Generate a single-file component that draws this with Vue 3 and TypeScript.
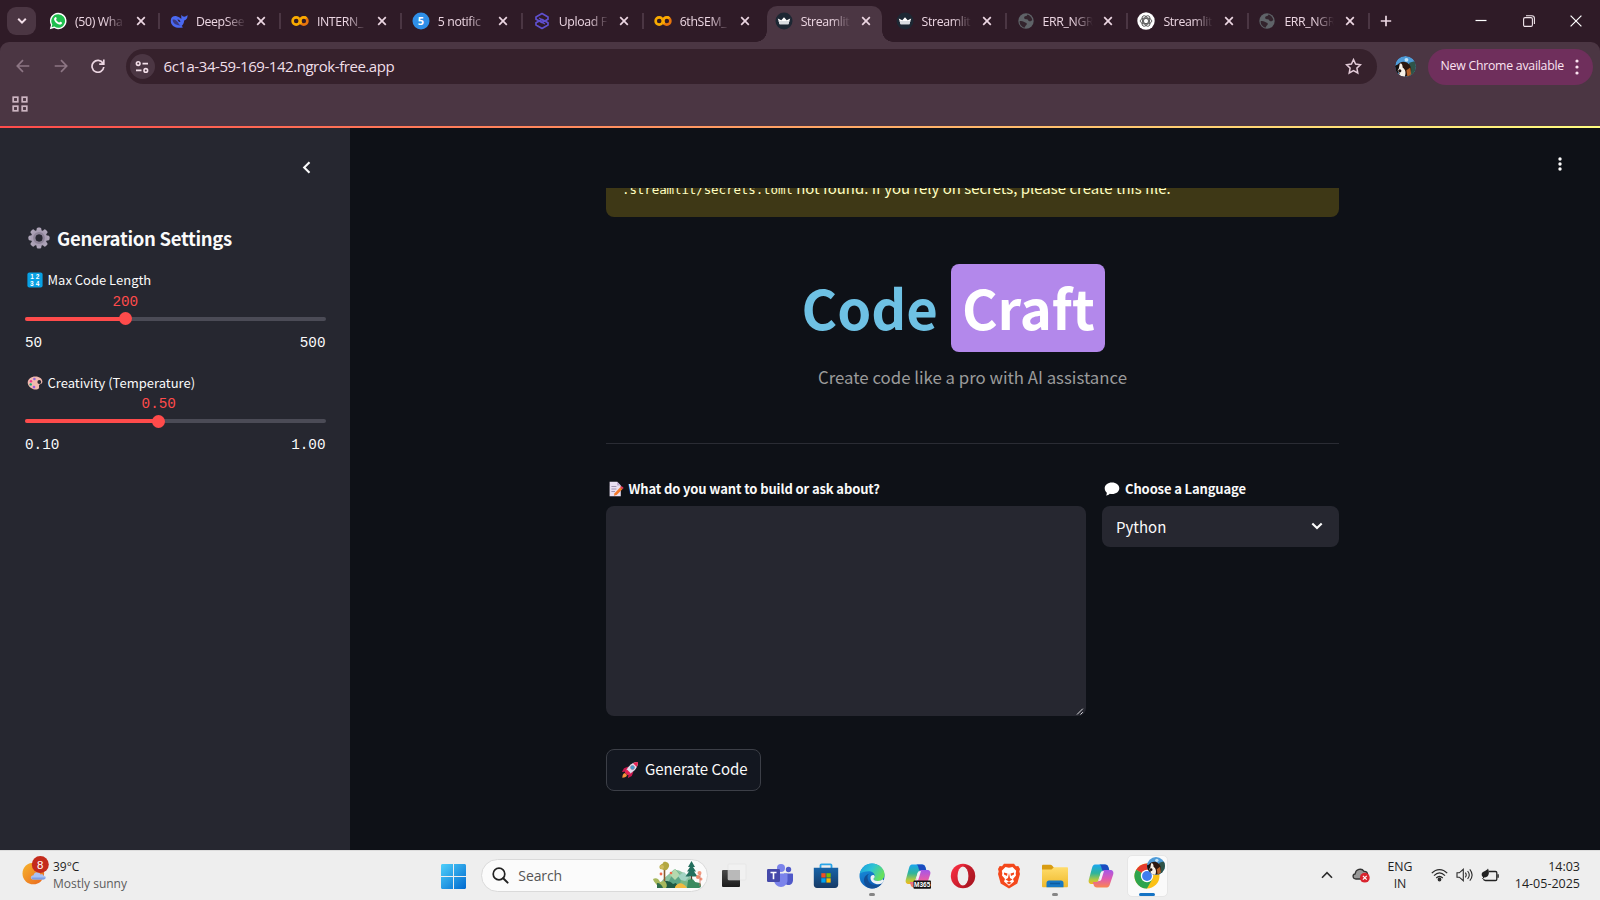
<script setup lang="ts">
interface Tab {
  title: string
  icon: 'whatsapp' | 'deepseek' | 'colab' | 'five' | 'upload' | 'crown' | 'globe' | 'gpt'
  active?: boolean
  sep: boolean
}

interface Slider {
  kind: 'numbers' | 'palette'
  label: string
  value: string
  min: string
  max: string
  pct: number
}

const tabs: Tab[] = [
  { title: '(50) Wha', icon: 'whatsapp', sep: true },
  { title: 'DeepSee', icon: 'deepseek', sep: true },
  { title: 'INTERN_', icon: 'colab', sep: true },
  { title: '5 notific', icon: 'five', sep: true },
  { title: 'Upload F', icon: 'upload', sep: true },
  { title: '6thSEM_', icon: 'colab', sep: false },
  { title: 'Streamlit', icon: 'crown', active: true, sep: false },
  { title: 'Streamlit', icon: 'crown', sep: true },
  { title: 'ERR_NGR', icon: 'globe', sep: true },
  { title: 'Streamlit', icon: 'gpt', sep: true },
  { title: 'ERR_NGR', icon: 'globe', sep: true },
]

const sliders: Slider[] = [
  { kind: 'numbers', label: 'Max Code Length', value: '200', min: '50', max: '500', pct: 33.33 },
  { kind: 'palette', label: 'Creativity (Temperature)', value: '0.50', min: '0.10', max: '1.00', pct: 44.44 },
]
</script>

<template>
  <div class="screen">
    <svg class="defs" width="0" height="0" aria-hidden="true">
      <defs>
        <linearGradient id="gWin" x1="0" y1="0" x2="1" y2="1"><stop offset="0" stop-color="#4fd0fb" /><stop offset="1" stop-color="#0069cf" /></linearGradient>
        <linearGradient id="gEdgeA" x1="0" y1="0" x2="1" y2="0.5"><stop offset="0" stop-color="#1a9be0" /><stop offset="0.5" stop-color="#2cc3d5" /><stop offset="1" stop-color="#66e05a" /></linearGradient>
        <linearGradient id="gEdgeB" x1="0" y1="0" x2="0.4" y2="1"><stop offset="0" stop-color="#1c9ce4" /><stop offset="1" stop-color="#0c59b5" /></linearGradient>
        <linearGradient id="gCopA" x1="0" y1="0" x2="0" y2="1"><stop offset="0" stop-color="#1aa6f0" /><stop offset="0.45" stop-color="#2fb49b" /><stop offset="0.8" stop-color="#b8c93c" /><stop offset="1" stop-color="#f3b41b" /></linearGradient>
        <linearGradient id="gCopB" x1="0" y1="0" x2="0" y2="1"><stop offset="0" stop-color="#a457e8" /><stop offset="0.5" stop-color="#e05ab0" /><stop offset="1" stop-color="#fa8650" /></linearGradient>
        <linearGradient id="gOpera" x1="0" y1="0" x2="1" y2="1"><stop offset="0" stop-color="#ff3044" /><stop offset="1" stop-color="#a9121e" /></linearGradient>
        <linearGradient id="gSun" x1="0" y1="0" x2="1" y2="1"><stop offset="0" stop-color="#f7b52c" /><stop offset="1" stop-color="#e9661f" /></linearGradient>
        <linearGradient id="gStore" x1="0" y1="0" x2="0" y2="1"><stop offset="0" stop-color="#1763a8" /><stop offset="1" stop-color="#163a66" /></linearGradient>
        <linearGradient id="gFolder" x1="0" y1="0" x2="0" y2="1"><stop offset="0" stop-color="#ffdc6b" /><stop offset="1" stop-color="#efb92c" /></linearGradient>
        <linearGradient id="gDark" x1="0" y1="0" x2="0" y2="1"><stop offset="0" stop-color="#4a4a4a" /><stop offset="1" stop-color="#1c1c1c" /></linearGradient>
        <clipPath id="dogClip"><circle cx="11" cy="11" r="11" /></clipPath>
        <symbol id="dog" viewBox="0 0 22 22">
          <g clip-path="url(#dogClip)">
            <rect width="22" height="22" fill="#4e9bd8" />
            <circle cx="12" cy="4" r="2" fill="#bfe2f7" />
            <path d="M15 7 22 5v17h-9z" fill="#2f5449" />
            <path d="M2 10c3-5 9-5 12-2 3 2 4 7 2 11-2 3-8 3-11 3z" fill="#2b1710" />
            <path d="M0 10l4-1 1 4-2 6-3-2z" fill="#14100f" />
            <path d="M5 8c2-1 3 1 3 4 3 2 4 6 2 10H3l2-4c-2-2-3-3-1-5z" fill="#f6efe6" />
            <path d="M12 15l4-3 1 7-4 3z" fill="#b5612a" />
            <circle cx="5" cy="15.500" r="1.700" fill="#201412" />
          </g>
        </symbol>
        <symbol id="copilot" viewBox="0 0 26 26">
          <path d="M7 1.500h10c2 0 3 1 3.500 3L21.500 8H15l-2 1-3 9c-.6 2-1.500 3-3.500 3H4c-3 0-4-2-3-5L4 5c.6-2 1.500-3.500 3-3.500z" fill="url(#gCopA)" />
          <path d="M11 1.500h6c2 0 3 1 3.500 3L21.500 8h-5c-2 0-2.500-1-3-3-.4-2-1-3.500-2.500-3.500z" fill="#1c4bc0" />
          <path d="M19 24.500H9c-2 0-3-1-3.500-3l-.7-2.500H8c2 0 3-1 3.500-3l2.500-7c.6-1.500 1.500-2 3-2h5c3 0 4 2 3 5l-3 9c-.6 2-1.500 3.500-3 3.500z" fill="url(#gCopB)" />
          <path d="M12.500 10.500c.6-1.700 1.500-2.500 3-2.500H16l-2.500 8c-.4 1.400-1.200 2-2.500 2z" fill="#f4eef6" />
        </symbol>
      </defs>
    </svg>

    <header class="tabstrip">
      <div class="tab-search">
        <svg width="12" height="8" viewBox="0 0 12 8"><path d="M2.200 1.800 6 5.600l3.800-3.800" fill="none" stroke="#f3dfe9" stroke-width="2" /></svg>
      </div>
      <div class="tabs">
        <div v-for="(tab, i) in tabs" :key="i" class="tab" :class="{ active: tab.active }">
          <svg class="favicon" width="18" height="18" viewBox="0 0 18 18">
            <template v-if="tab.icon === 'whatsapp'">
              <path d="M9 .8a8.100 8.100 0 0 0-7 12.100L.8 17.200l4.400-1.100A8.200 8.200 0 1 0 9 .8z" fill="#fff" />
              <path d="M9.100 2.200a6.800 6.800 0 0 0-5.800 10.300l-.7 2.800 2.800-.7a6.800 6.800 0 1 0 3.700-12.400z" fill="#1fbf4e" />
              <path d="M6.300 5.200c.6-.3 1 0 1.300 1.100.2.700-.4 1-.5 1.500.6 1.300 1.500 2.100 2.900 2.700.6-.1.900-1 1.500-.8 1.600.6 1.800.9 1.500 1.600-.5 1.300-2 1.600-3.500 1C7.200 11.400 5.900 9.800 5.200 8c-.4-1.200.2-2.400 1.100-2.800z" fill="#fff" />
            </template>
            <template v-else-if="tab.icon === 'deepseek'">
              <path d="M.8 8.200C1 5 3.600 3.600 6.600 4.200c2 .4 3.200 1.400 4.700 2.900.2-1.600-.3-2.500.3-4.300.7 1.400 1.400 1.900 2.600 1.900 1.300 0 2-.5 3.300-1.700.3 2.800-.9 5-3.300 5.500-.2 2.600-1.100 4.200-2.600 5.400l1.500 1.300c-2.900.9-7.300.8-10-1.300C1.500 12.500.6 10.600.8 8.200z" fill="#4a68f0" />
              <path d="M2.600 7.600c2.800-.6 4.500 1.500 6.200 4.200.7 1.100 1.300 1.500 2 1.700-3.600.4-8.400-1.800-8.200-5.900z" fill="#3b3a80" />
              <path d="M7.400 7.600c1.600-.3 2.800.8 3 2.400l-1.500-.2z" fill="#2e1a28" />
            </template>
            <template v-else-if="tab.icon === 'colab'">
              <circle cx="5.200" cy="9" r="3.600" fill="none" stroke="#f9ab00" stroke-width="2.600" />
              <circle cx="12.800" cy="9" r="3.600" fill="none" stroke="#e8740c" stroke-width="2.600" />
              <path d="M10.300 11.600a3.600 3.600 0 1 1 5.100-5.200" fill="none" stroke="#f9ab00" stroke-width="2.600" />
            </template>
            <template v-else-if="tab.icon === 'five'">
              <circle cx="9" cy="9" r="8.500" fill="#2f8fe8" />
              <text x="9" y="12.900" text-anchor="middle" class="five">5</text>
            </template>
            <template v-else-if="tab.icon === 'upload'">
              <g fill="none" stroke="#5f50cf" stroke-width="1.700" stroke-linejoin="round">
                <path d="M9 1.500 15 4.900v2.300L9 10.600 3 7.200V4.900z" />
                <path d="M9 7.400l6 3.400v2.300l-6 3.400-6-3.400v-2.300z" />
                <path d="M6 6l6 3.400M6 8.600l6 3.400" stroke-width="1.400" />
              </g>
            </template>
            <template v-else-if="tab.icon === 'crown'">
              <circle cx="9" cy="9" r="8.500" fill="#1d2733" />
              <path d="M2.800 6.400 6.300 8.300 9 5.200l2.700 3.100 3.500-1.900-1.800 5.800H4.600z" fill="#fff" />
              <path d="M3.600 9h10.800l-1 3.200H4.600z" fill="#d9dde1" />
            </template>
            <template v-else-if="tab.icon === 'globe'">
              <circle cx="9" cy="9" r="7.700" fill="#5f6368" />
              <path d="M2.600 9.200c1-.4 3-.3 4.200.6 1.200 1 3 .7 3 2.100 0 1.300-1.700 1.200-1.900 3.700-3-.4-5.300-3-5.300-6.400zM8.200 4.300c1.400 0 1.900-.7 2.200-1.700 2.500.6 4.400 2.800 4.900 5.300-1 .6-1.600 1.700-3 1.300-1.300-.4-1-1.800-2.500-2-1.500-.2-2.200.1-2.600-1-.2-1 .3-1.800 1-1.900z" fill="#33242d" />
            </template>
            <template v-else>
              <circle cx="9" cy="9" r="8.700" fill="#fff" />
              <g fill="none" stroke="#444" stroke-width="0.800">
                <ellipse v-for="a in [0, 60, 120]" :key="a" cx="9" cy="9" rx="5.800" ry="3.100" :transform="`rotate(${a} 9 9)`" />
                <path d="M9 6.300l2.400 1.400v2.700L9 11.800l-2.400-1.400V7.700z" />
              </g>
            </template>
          </svg>
          <span class="title">{{ tab.title }}</span>
          <svg class="close" width="10" height="10" viewBox="0 0 10 10"><path d="M1.200 1.200l7.600 7.600M8.800 1.200 1.200 8.800" stroke="#ecd6e2" stroke-width="1.700" /></svg>
          <i v-if="tab.sep" class="sep"></i>
        </div>
      </div>
      <svg class="plus" width="12" height="12" viewBox="0 0 12 12"><path d="M6 .8v10.400M.8 6h10.400" stroke="#ecd6e2" stroke-width="1.700" /></svg>
      <div class="winctl">
        <svg width="12" height="12" viewBox="0 0 12 12"><path d="M.5 5.500h11" stroke="#fff" stroke-width="1.200" /></svg>
        <svg width="12" height="12" viewBox="0 0 12 12"><g fill="none" stroke="#f1e6ec" stroke-width="1.100"><rect x=".6" y="2.600" width="8.800" height="8.800" rx="1.400" /><path d="M3 .7h5.800c1.500 0 2.600 1 2.600 2.500V9" /></g></svg>
        <svg width="12" height="12" viewBox="0 0 12 12"><path d="M.6.6l10.800 10.800M11.400.6.6 11.400" stroke="#fff" stroke-width="1.200" /></svg>
      </div>
    </header>

    <div class="toolbar">
      <div class="navrow">
        <svg class="nav dim" width="14" height="14" viewBox="0 0 14 14"><path d="M13.300 7H1.500M7 1.200 1.300 7 7 12.800" /></svg>
        <svg class="nav dim" width="14" height="14" viewBox="0 0 14 14"><path d="M.7 7h11.800M7 1.200 12.700 7 7 12.800" /></svg>
        <svg class="nav" width="14" height="14" viewBox="0 0 14 14"><path d="M12 4.300A5.900 5.900 0 1 0 12.800 8M12.800.5v4.700H8.200" /></svg>
        <div class="omnibox">
          <div class="tune">
            <svg width="14" height="14" viewBox="0 0 14 14" fill="none" stroke="#f3dfe9" stroke-width="1.600"><circle cx="3.200" cy="3.600" r="1.800" /><path d="M7.500 3.600H13M1 10.400h5.500" /><circle cx="10.800" cy="10.400" r="1.800" /></svg>
          </div>
          <span class="url">6c1a-34-59-169-142.ngrok-free.app</span>
          <svg class="star" width="17" height="17" viewBox="0 0 17 17"><path d="M8.500 1.600l2.100 4.500 4.900.6-3.600 3.400.9 4.900-4.300-2.400L4.200 15l.9-4.900L1.500 6.700l4.900-.6z" fill="none" stroke="#e3cbd8" stroke-width="1.500" /></svg>
        </div>
        <svg class="avatar" width="21" height="21"><use href="#dog" /></svg>
        <div class="update"><span>New Chrome available</span>
          <svg width="4" height="16" viewBox="0 0 4 16" fill="#fbe3f1"><circle cx="2" cy="2" r="1.600" /><circle cx="2" cy="8" r="1.600" /><circle cx="2" cy="14" r="1.600" /></svg>
        </div>
      </div>
      <div class="bookmarks">
        <svg width="16" height="16" viewBox="0 0 16 16" fill="none" stroke="#cdb5c2" stroke-width="1.700"><rect x="1.200" y="1.200" width="4.600" height="4.600" /><rect x="10.200" y="1.200" width="4.600" height="4.600" /><rect x="1.200" y="10.200" width="4.600" height="4.600" /><rect x="10.200" y="10.200" width="4.600" height="4.600" /></svg>
      </div>
    </div>

    <div class="page">
      <div class="rainbow"></div>
      <aside class="sidebar">
        <div class="collapse">
          <svg width="9" height="13" viewBox="0 0 9 13"><path d="M7.500 1.300 2.200 6.500l5.300 5.200" fill="none" stroke="#fafafa" stroke-width="2.100" /></svg>
        </div>
        <h2>
          <svg width="22" height="22" viewBox="0 0 22 22">
            <g fill="#aea4b8"><rect v-for="a in [0, 45, 90, 135]" :key="a" x="8.600" y="0.400" width="4.800" height="21.200" rx="1.600" :transform="`rotate(${a} 11 11)`" /></g>
            <circle cx="11" cy="11" r="6" fill="#292833" stroke="#a89db3" stroke-width="4.200" />
            <circle cx="11" cy="11" r="4.800" fill="none" stroke="#8d8398" stroke-width="2.200" />
          </svg>
          <span>Generation Settings</span>
        </h2>
        <section v-for="s in sliders" :key="s.label" class="slider">
          <div class="s-label">
            <svg v-if="s.kind === 'numbers'" width="16" height="16" viewBox="0 0 16 16">
              <rect x=".4" y=".4" width="15.200" height="15.200" rx="2" fill="#08a1e4" />
              <g class="nums"><text x="3.300" y="7">1</text><text x="8.700" y="7">2</text><text x="3" y="13.600">3</text><text x="8.700" y="13.600">4</text></g>
            </svg>
            <svg v-else width="16" height="16" viewBox="0 0 16 16">
              <path d="M8.500 1.400c4 0 6.900 2.300 6.900 5.200 0 2.500-2.200 2.300-3.200 3.400-.8.900.6 2.200-.5 3.500-.9 1.200-3.300 1.400-5.400.7C3 13.100.7 10.500.7 7.600c0-3.600 3.400-6.200 7.800-6.200z" fill="#f3b8ae" />
              <circle cx="12.300" cy="7" r="1.900" fill="#292833" /><circle cx="7.400" cy="4" r="1.300" fill="#9167d8" /><circle cx="4" cy="6.200" r="1.200" fill="#f0388a" /><circle cx="3.700" cy="9.400" r="1.200" fill="#15a878" /><circle cx="7" cy="12.100" r="1.300" fill="#9a5be0" />
            </svg>
            <span>{{ s.label }}</span>
          </div>
          <div class="s-value"><span :style="{ left: s.pct + '%' }">{{ s.value }}</span></div>
          <div class="track"><div class="fill" :style="{ width: s.pct + '%' }"><i class="thumb"></i></div></div>
          <div class="s-range"><span>{{ s.min }}</span><span>{{ s.max }}</span></div>
        </section>
      </aside>

      <main class="main">
        <div class="app-header">
          <svg width="4" height="14" viewBox="0 0 4 14" fill="#fafafa"><circle cx="2" cy="2" r="1.700" /><circle cx="2" cy="7" r="1.700" /><circle cx="2" cy="12" r="1.700" /></svg>
        </div>
        <div class="scroller">
          <div class="alert"><p><code>.streamlit/secrets.toml</code> not found. If you rely on secrets, please create this file.</p></div>
          <div class="hero"><span class="w-code">Code</span><span class="w-craft">Craft</span></div>
          <p class="tagline">Create code like a pro with AI assistance</p>
          <hr />
          <div class="form">
            <div class="col-a">
              <div class="f-label">
                <svg width="16" height="16" viewBox="0 0 16 16">
                  <path d="M1.600.8h7.600l3.600 3.600v10.800H1.600z" fill="#e9dff2" /><path d="M9.200.8v3.600h3.600z" fill="#b9a7c9" />
                  <path d="M3.400 5.500h5M3.400 8h5M3.400 10.500h3.600" stroke="#998ba9" stroke-width=".9" />
                  <path d="M12.300 6.200l2.300 1.900-6 6-2.700.7.700-2.600z" fill="#f5792a" /><path d="M12.300 6.200l1.200-1.100 2.200 1.900-1.100 1.100z" fill="#ee3d63" />
                </svg>
                <span>What do you want to build or ask about?</span>
              </div>
              <div class="textarea">
                <svg width="8" height="8" viewBox="0 0 8 8"><path d="M1 7.500 6.800 1.700M4.500 7.500l2.300-2.300" stroke="#d8d8dc" stroke-width="1" /></svg>
              </div>
            </div>
            <div class="col-b">
              <div class="f-label lang">
                <svg width="16" height="16" viewBox="0 0 16 16"><path d="M8 1.500c4.200 0 7.300 2.500 7.300 5.800s-3.100 5.800-7.300 5.800c-.8 0-1.600-.1-2.300-.3-.8 1-2.100 1.700-3.700 1.800.7-.9.900-1.900.8-2.900C1.500 10.600.7 9 .7 7.300.7 4 3.800 1.500 8 1.500z" fill="#fff" /></svg>
                <span>Choose a Language</span>
              </div>
              <div class="select"><span>Python</span>
                <svg width="12" height="8" viewBox="0 0 12 8"><path d="M1.300 1.400 6 6.100l4.700-4.700" fill="none" stroke="#fafafa" stroke-width="2.100" /></svg>
              </div>
            </div>
          </div>
          <div class="generate">
            <svg width="18" height="18" viewBox="0 0 18 18">
              <path d="M7.500 5.500 3 7.200.9 11l4.500-.6zM12.500 10.500 10.800 15 7 17l.6-4.500z" fill="#c9184e" />
              <path d="M17 1C12 1 7.800 4 4.500 10.500l3 3C14 10.200 17 6 17 1z" fill="#e3dcec" />
              <path d="M17 1c-1.800 0-3.500.4-5 1.200L15.800 6C16.600 4.500 17 2.800 17 1zM5.700 8.300l-1.900 3.200 2.700 2.700 3.200-1.900z" fill="#e62253" />
              <circle cx="11.500" cy="6.500" r="1.900" fill="#3ba0d6" stroke="#8a7d9b" stroke-width=".8" />
              <path d="M4 12c-1.800.4-2.600 2-2.700 4.700 2.700-.1 4.300-.9 4.700-2.700z" fill="#f7933a" />
            </svg>
            <span>Generate Code</span>
          </div>
        </div>
      </main>
    </div>

    <footer class="taskbar">
      <div class="weather">
        <svg width="28" height="30" viewBox="0 0 28 30">
          <circle cx="11.300" cy="18.500" r="10.800" fill="url(#gSun)" />
          <path d="M11.500 24.500c-3.500 0-3.500-4 0-4.300.5-3.700 6-3.900 7-.7 1.500-.8 3 0 3 1.300 3.300.2 3 3.700 0 3.700z" fill="#a9c1f5" /><path d="M9.500 22.500h13.800c0 1.300-.8 2-2 2H11.500c-1.200 0-2-.8-2-2z" fill="#7f9fe6" />
          <circle cx="18.300" cy="9.500" r="8.500" fill="#c42b1c" /><text x="18.300" y="13.500" class="badge" text-anchor="middle">8</text>
        </svg>
        <div class="w-text"><b>39°C</b><span>Mostly sunny</span></div>
      </div>

      <div class="dock">
        <div class="slot start"><svg width="25" height="25" viewBox="0 0 25 25" fill="url(#gWin)"><path d="M1.500 0H12v12H0V1.500C0 .6.600 0 1.500 0zM13 0h10.500c.9 0 1.500.6 1.500 1.500V12H13zM0 13h12v12H1.500c-.9 0-1.500-.6-1.500-1.500zM13 13h12v10.500c0 .9-.6 1.500-1.500 1.500H13z" /></svg></div>
        <div class="search">
          <svg width="17" height="17" viewBox="0 0 17 17"><circle cx="7" cy="7" r="5.800" fill="none" stroke="#222" stroke-width="1.700" /><path d="M11.200 11.200 15.600 15.600" stroke="#222" stroke-width="2" stroke-linecap="round" /></svg>
          <span>Search</span>
          <svg class="forest" width="50" height="28" viewBox="0 0 50 28">
            <path d="M5 27c2-6 6-10 11-14l5-4.500 5 1 5 2.500 9 6 6 9z" fill="#8cc3a0" />
            <path d="M16 20 22 8l6 6 8 13H14z" fill="#5ba585" /><path d="M17 14l5-6 5 6-5 5z" fill="#b5d9ae" />
            <path d="M25 15l6-4 5 5-6 6z" fill="#a3d4c4" /><path d="M28 19l8 2 4 6H26z" fill="#79b884" />
            <path d="M11.500 6v18" stroke="#8a5a2e" stroke-width="1.600" /><path d="M6.500 6c0-3 3-2 4-5 3-1 6.500 1.500 5.500 4.500s-3 4.500-5 3.500-4.500 0-4.500-3z" fill="#b3a842" /><circle cx="9" cy="6" r="2" fill="#d0bb5b" />
            <path d="M38.500 0l-3.500 6h2l-3 4.500h2l-3.500 5h12l-3.500-5h2l-3-4.500h2z" fill="#246f5e" /><path d="M38.500 15v9" stroke="#5b3d2a" stroke-width="1.200" />
            <path d="M0 18c3-2 6 0 7 3l4-1c3 1 4 4 5 7H6c-1-3-5-5-6-9z" fill="#a7b85d" /><path d="M4 22c3 0 5 2 6 5H4z" fill="#2f6c4b" />
            <path d="M12 20c3 0 5 0 8 3l3-1 3 5H13c2-3 0-5-1-7z" fill="#1f5a43" /><path d="M35 19c4-2 6 0 7 2l5 1c2 2 1 5-1 5H34z" fill="#3a8a5f" />
            <circle cx="46.500" cy="12" r="2" fill="#f2977c" /><circle cx="45" cy="16" r="2" fill="#f08a6c" /><circle cx="48" cy="18" r="1.500" fill="#f2937a" /><path d="M47 13v12" stroke="#d2705a" stroke-width=".8" /><circle cx="8" cy="13" r="1.400" fill="#ef6a4b" /><circle cx="18" cy="12" r="1.300" fill="#ef6a4b" />
            <path d="M22 26c3-5 8-5 12 1H22z" fill="#f1b93f" />
          </svg>
        </div>
        <div class="slot"><svg width="26" height="26" viewBox="0 0 26 26"><rect x="1" y="7" width="18" height="17" rx="1" fill="url(#gDark)" /><rect x="7" y="1" width="18" height="16" rx="1" fill="#f2f2f2" fill-opacity=".82" stroke="#dedede" stroke-width=".5" /><path d="M7 7h12v10H7z" fill="#b9b9b9" /></svg></div>
        <div class="slot"><svg width="26" height="26" viewBox="0 0 26 26"><circle cx="21.500" cy="6.500" r="2.700" fill="#5059c9" /><circle cx="14" cy="5" r="4" fill="#7b83eb" /><path d="M17 10.500h8c.6 0 1 .4 1 1V17c0 3-2 5-4.500 5S17 20 17 17z" fill="#5059c9" /><path d="M7.500 10.500h12c.6 0 1 .4 1 1V17c0 4-3 7-6.500 7s-7-3-7-7z" fill="#7b83eb" /><rect y="6" width="13" height="13" rx="1.200" fill="#4549a9" /><path d="M3.500 9.500h6M6.500 9.500v6.700" stroke="#fff" stroke-width="1.600" /></svg></div>
        <div class="slot"><svg width="26" height="26" viewBox="0 0 26 26"><path d="M7.500 6V2.300c0-.7.400-1 1-1h9c.6 0 1 .3 1 1V6" fill="none" stroke="#2aa5e8" stroke-width="1.800" /><path d="M.8 4.800h24.400v17c0 2-1.300 3.200-3.200 3.200H4c-2 0-3.200-1.200-3.200-3.200z" fill="url(#gStore)" /><path d="M8.300 10.200h4.300v4.300H8.300z" fill="#f25022" /><path d="M13.400 10.200h4.300v4.300h-4.300z" fill="#7fba00" /><path d="M8.300 15.300h4.300v4.300H8.300z" fill="#00a4ef" /><path d="M13.400 15.300h4.300v4.300h-4.300z" fill="#ffb900" /></svg></div>
        <div class="slot run"><svg width="26" height="26" viewBox="0 0 26 26"><circle cx="13" cy="13" r="12.500" fill="url(#gEdgeB)" /><path d="M.8 10.500C2.200 4.500 7 .5 13 .5c7 0 12.500 5 12.500 11 0 4-2.800 6.500-6.500 6.500-2.500 0-4.500-.8-4.500-2 0-.7 1.200-1.200 1.200-3 0-2.800-2.800-4.800-6-4.800-4 0-7.300 1-8.900 2.300z" fill="url(#gEdgeA)" /><path d="M8.500 14c0 6 5 9 10 8 2-.4 3.500-1.200 4.300-1.500C20.500 23.800 17 25.500 13 25.500c-5 0-8-4-8-8 0-3.500 2.200-6 5.800-7C9 11.500 8.500 12.500 8.500 14z" fill="#124f96" /><path d="M14.500 16c0 1.200 2 2 4.500 2 1.800 0 3.500-.6 4.600-1.700l1.500 1.500-2.300 2.700c-4.500 2.200-11.300-.4-11.300-5.500 0-1.900 1.200-3 2.500-3 1 0 1.700.6 1.700 1.700 0 1-1.200 1.300-1.200 2.300z" fill="#eef3f6" /></svg></div>
        <div class="slot"><svg width="26" height="26" viewBox="0 0 26 26"><use href="#copilot" /><rect x="8.500" y="17.500" width="17.500" height="8.200" rx="1" fill="#111" /><text x="17.200" y="24" text-anchor="middle" class="m365">M365</text></svg></div>
        <div class="slot"><svg width="26" height="26" viewBox="0 0 26 26"><circle cx="13" cy="13" r="12.200" fill="url(#gOpera)" /><ellipse cx="13" cy="13" rx="5.500" ry="9.600" fill="#eee" /><path d="M13 22.600c3 0 5.500-4.300 5.500-9.600S16 3.400 13 3.400c2-2 6-1.500 8.500 1.200 5 5 5 12 0 16.800-2.500 2.700-6.500 3.200-8.500 1.200z" fill="#9e1620" fill-opacity=".4" /></svg></div>
        <div class="slot"><svg width="26" height="26" viewBox="0 0 26 26"><path d="M8 .8h10l2 2.400 2.300-.2 1.700 3-.7 2.500.7 2.500-2.700 9.500L13 25.600 4.700 20.500 2 11l.7-2.500L2 6l1.700-3 2.300.2z" fill="#f4481c" /><path d="M13 4.800l3.500-.8 3.700 3.800-.5 2.600.3 2-3 3.500 1 2.600-5 4.200-5-4.200 1-2.600-3-3.500.3-2-.5-2.600L9.500 4z" fill="#fff" /><path d="M8 9.500l3.500 1L11 13l-3-1.500zM18 9.500l-3.500 1L15 13l3-1.500zM13 10l1 5 2.500 1.500L13 18.500l-3.500-2L12 15zM10.500 19.800l2.500-1.300 2.500 1.300L13 21.600z" fill="#f4481c" /></svg></div>
        <div class="slot run"><svg width="26" height="26" viewBox="0 0 26 26"><path d="M0 3c0-.8.500-1.300 1.300-1.300h7c.8 0 1.500.3 2 1L12 4.800V9H0z" fill="#d89c12" /><path d="M0 6.500h9.500l2.500-2.200h13c.6 0 1 .4 1 1V23c0 .8-.5 1.300-1.300 1.300H1.300C.5 24.300 0 23.800 0 23z" fill="url(#gFolder)" /><path d="M4.500 24.300V20c0-1.500 1-2.500 2.500-2.500h12c1.500 0 2.500 1 2.500 2.500v4.300z" fill="#1778c4" /><path d="M8 20.500h10" stroke="#0e5b9f" stroke-width="1.600" /></svg></div>
        <div class="slot"><svg width="26" height="26"><use href="#copilot" /></svg></div>
        <div class="slot chrome">
          <svg width="26" height="26" viewBox="0 0 26 26"><circle cx="13" cy="13" r="12.500" fill="#fbc116" /><path d="M13 13 2.200 6.700A12.500 12.500 0 0 1 23.800 6.700L13 6.700z" fill="#e33b2e" /><path d="M13 13 2.200 6.700A12.500 12.500 0 0 0 13 25.500L18.400 16z" fill="#2da44e" /><circle cx="13" cy="13" r="6.200" fill="#fff" /><circle cx="13" cy="13" r="4.900" fill="#3f7df0" /></svg>
          <svg class="profile" width="18" height="18"><use href="#dog" /></svg>
        </div>
      </div>

      <div class="tray">
        <svg class="chev" width="12" height="8" viewBox="0 0 12 8"><path d="M1 6.800 6 1.600l5 5.200" fill="none" stroke="#2b2b2b" stroke-width="1.600" /></svg>
        <svg class="cloud" width="18" height="16" viewBox="0 0 18 16"><path d="M4 12C.3 12 .2 7.200 3.200 6.800 3.600 2.300 9.500.6 12 4.300c2.500-.2 3.800 1.500 3.500 3.500L10 12z" fill="#999" stroke="#333" stroke-width="1.300" /><circle cx="12.800" cy="10.700" r="4.900" fill="#d9252f" /><path d="M10.900 8.800l3.800 3.800M14.700 8.800l-3.800 3.800" stroke="#fff" stroke-width="1.200" /></svg>
        <div class="lang-ind"><span>ENG</span><span>IN</span></div>
        <svg class="wifi" width="17" height="14" viewBox="0 0 17 14" fill="none" stroke="#2b2b2b" stroke-width="1.200"><path d="M.8 5.200c4.500-4.800 10.900-4.800 15.400 0M3 7.700c3.400-3.400 7.600-3.400 11 0M5.200 10c2.200-2 4.400-2 6.600 0" /><circle cx="8.500" cy="11.500" r="1.300" fill="#2b2b2b" /></svg>
        <svg class="vol" width="17" height="14" viewBox="0 0 17 14" fill="none" stroke="#2b2b2b" stroke-width="1.100"><path d="M1 4.800h2.300L7.300 1.300v11.400L3.300 9.200H1z" /><path d="M9.300 4.700c1.200 1.500 1.200 3.100 0 4.600M11.600 3c2.100 2.500 2.100 5.500 0 8M13.800 1.300c3 3.700 3 7.700 0 11.400" /></svg>
        <svg class="bat" width="19" height="15" viewBox="0 0 19 15"><path d="M8 3.500h6.500c.8 0 1.300.5 1.300 1.300v6.400c0 .8-.5 1.300-1.300 1.300H4.500c-1 0-1.800-.5-1.800-1.500" fill="none" stroke="#222" stroke-width="1.300" /><path d="M16.400 6.300h1.400v3.400h-1.400z" fill="#222" /><path d="M7 .6c1.800 4 1 8.500-3 8.900-2.500 0-3.600-1.500-3.300-3.400C1.200 3.300 5.400 3.300 7 .6z" fill="#222" /><path d="M4.500 6.500 1.500 11" stroke="#222" /></svg>
        <div class="clock"><span>14:03</span><span>14-05-2025</span></div>
      </div>
    </footer>
  </div>
</template>

<style>
html,
body {
  background: #0e1117;
}
</style>

<style scoped>
* {
  box-sizing: border-box;
}
svg {
  display: block;
  flex: none;
}
.screen {
  width: 1600px;
  height: 900px;
  display: flex;
  flex-direction: column;
  overflow: hidden;
  position: relative;
  background: #2f1b27;
  font-family: "Noto Sans CJK SC", "Open Sans", sans-serif;
  color: #fafafa;
}
.defs {
  position: absolute;
}

/* tab strip */
.tabstrip {
  height: 42px;
  flex: none;
  display: flex;
  align-items: center;
  padding-left: 7px;
  font-family: "Open Sans", sans-serif;
}
.tab-search {
  width: 29px;
  height: 28px;
  border-radius: 9px;
  background: #4b3643;
  display: flex;
  align-items: center;
  justify-content: center;
}
.tabs {
  display: flex;
  height: 42px;
  margin-left: 3.500px;
}
.tab {
  width: 120.950px;
  height: 42px;
  position: relative;
  display: flex;
  align-items: center;
  padding-left: 9.500px;
  z-index: 0;
}
.title {
  width: 50px;
  height: 20px;
  margin-left: 8px;
  padding-top: 0.500px;
  line-height: 20px;
  font-size: 12.300px;
  letter-spacing: -0.35px;
  white-space: nowrap;
  color: #ecd6e2;
  -webkit-mask-image: linear-gradient(90deg, #000 60%, transparent 100%);
  mask-image: linear-gradient(90deg, #000 60%, transparent 100%);
}
.close {
  margin-left: 10.500px;
}
.sep {
  position: absolute;
  right: 0;
  top: 13px;
  width: 2px;
  height: 16px;
  background: #4b3643;
}
.tab.active::before {
  content: "";
  position: absolute;
  z-index: -1;
  left: 2px;
  right: 4px;
  top: 6px;
  bottom: 0;
  border-radius: 10px 10px 0 0;
  background: #4b3643;
}
.tab.active::after {
  content: "";
  position: absolute;
  z-index: -1;
  left: -9px;
  right: -7px;
  bottom: 0;
  height: 11px;
  background:
    radial-gradient(circle at 0 0, transparent 10.500px, #4b3643 11px) left / 11px 11px no-repeat,
    radial-gradient(circle at 100% 0, transparent 10.500px, #4b3643 11px) right / 11px 11px no-repeat;
}
.plus {
  margin-left: 10px;
}
.winctl {
  margin-left: auto;
  padding-right: 18px;
  display: flex;
  gap: 35.500px;
}

/* toolbar */
.toolbar {
  height: 84px;
  flex: none;
  background: #4b3643;
  border-radius: 9px 9px 0 0;
  padding-top: 7px;
}
.navrow {
  height: 35px;
  display: flex;
  align-items: center;
  padding-left: 16px;
}
.nav {
  margin-right: 23.500px;
  margin-top: -2px;
  fill: none;
  stroke: #ecd6e2;
  stroke-width: 1.700;
}
.nav.dim {
  stroke: #8d7684;
}
.omnibox {
  width: 1251px;
  height: 35px;
  margin-left: -3px;
  border-radius: 18px;
  background: #36212c;
  display: flex;
  align-items: center;
  padding: 0 15px 0 4px;
  font-family: "Open Sans", sans-serif;
}
.tune {
  width: 25px;
  height: 25px;
  border-radius: 50%;
  background: #4b3643;
  display: flex;
  align-items: center;
  justify-content: center;
}
.url {
  margin: -2px 0 0 9px;
  font-size: 15px;
  letter-spacing: -0.45px;
  color: #f0dfe8;
}
.star {
  margin-left: auto;
}
.avatar {
  margin-left: 18px;
  border-radius: 50%;
}
.update {
  margin-left: 12px;
  width: 165px;
  height: 36px;
  border-radius: 18px;
  background: #6f2f5c;
  display: flex;
  align-items: center;
  justify-content: space-between;
  padding: 0 14px 0 13px;
  font: 12.300px "Open Sans", sans-serif;
  letter-spacing: -0.25px;
  color: #fbe3f1;
  white-space: nowrap;
}
.update span {
  margin-top: -2px;
}
.bookmarks {
  padding: 12px 0 0 12px;
}

/* streamlit page */
.page {
  flex: none;
  height: 724px;
  display: flex;
  position: relative;
  background: #0e1117;
}
.rainbow {
  position: absolute;
  left: 0;
  right: 0;
  top: 0;
  height: 2px;
  background: linear-gradient(90deg, #ff4b4b, #fffd80);
}
.sidebar {
  width: 350px;
  background: #262730;
  padding: 2px 24px 0 25px;
}
.collapse {
  height: 78px;
  display: flex;
  justify-content: flex-end;
  padding: 33px 15px 0 0;
}
h2 {
  margin: 17px 0 0;
  height: 30px;
  display: flex;
  align-items: center;
  padding-left: 3px;
  line-height: 30px;
}
h2 span {
  margin-left: 7px;
  font-size: 18.500px;
  letter-spacing: -0.3px;
  font-weight: 700;
  white-space: nowrap;
}
.slider {
  height: 102.500px;
}
h2 + .slider {
  margin-top: 17px;
}
.s-label {
  height: 20px;
  display: flex;
  align-items: center;
  padding-left: 1.500px;
  font-size: 13px;
  line-height: 20px;
}
.s-label span {
  margin-left: 5px;
}
.nums text {
  font: bold 6.500px "Liberation Sans", sans-serif;
  fill: #fff;
}
.s-value {
  position: relative;
  height: 20px;
}
.s-value span {
  position: absolute;
  top: 1.500px;
  transform: translateX(-50%);
  font: 14.300px/20px "Liberation Mono", monospace;
  color: #ff4b4b;
}
.track {
  height: 4px;
  margin-top: 6.500px;
  border-radius: 2px;
  background: #4b4b56;
}
.fill {
  position: relative;
  height: 4px;
  border-radius: 2px;
  background: #ff4b4b;
}
.thumb {
  position: absolute;
  right: -6.500px;
  top: -4.500px;
  width: 13px;
  height: 13px;
  border-radius: 50%;
  background: #ff4b4b;
}
.s-range {
  display: flex;
  justify-content: space-between;
  margin-top: 12px;
  margin-right: 0.500px;
  font: 14.300px/20px "Liberation Mono", monospace;
}

.main {
  flex: 1;
}
.app-header {
  height: 62px;
  display: flex;
  justify-content: flex-end;
  padding: 31px 38px 0 0;
}
.scroller {
  height: 662px;
  overflow: hidden;
  padding: 0 261px 0 256px;
}
.alert {
  height: 29px;
  border-radius: 0 0 8px 8px;
  background: #3e3816;
  color: #ffffc2;
  padding-left: 16px;
}
.alert p {
  margin: 0;
  position: relative;
  top: -13px;
  font-size: 14.950px;
  line-height: 26px;
  white-space: nowrap;
}
.alert code {
  font: 12.500px "DejaVu Sans Mono", monospace;
  letter-spacing: -0.1px;
}
.hero {
  height: 88px;
  margin: 47px 38px 0 0;
  display: flex;
  justify-content: center;
  font-size: 54.400px;
  line-height: 86px;
  font-weight: 700;
}
.w-code {
  color: #6ec1e4;
}
.w-craft {
  margin-left: 13.500px;
  width: 154px;
  height: 88px;
  text-align: center;
  border-radius: 8px;
  background: #b388eb;
  color: #fff;
}
.tagline {
  margin: 12px 0 0;
  height: 26px;
  line-height: 26px;
  text-align: center;
  font-size: 16.800px;
  color: #9b9b9b;
}
hr {
  margin: 52.500px 0 0;
  border: 0;
  height: 1px;
  background: #2a2c34;
}
.form {
  display: grid;
  grid-template-columns: 480px 1fr;
  gap: 16px;
  margin-top: 34.500px;
}
.f-label {
  height: 21px;
  margin-bottom: 6.500px;
  display: flex;
  align-items: center;
  padding-left: 1.500px;
  font-size: 13px;
  font-weight: 700;
  letter-spacing: -0.12px;
  white-space: nowrap;
}
.f-label span {
  margin: -1px 0 0 5px;
}
.f-label.lang {
  padding-left: 2px;
}
.textarea {
  height: 210px;
  border-radius: 8px;
  background: #262730;
  display: flex;
  align-items: flex-end;
  justify-content: flex-end;
  padding: 0 2px 1px 0;
}
.select {
  height: 41.500px;
  border-radius: 8px;
  background: #262730;
  display: flex;
  align-items: center;
  justify-content: space-between;
  padding: 0 16px 0 14px;
  font-size: 15px;
}
.generate {
  margin-top: 33px;
  width: 155px;
  height: 42px;
  border: 1px solid #3c3f47;
  border-radius: 8px;
  background: #131720;
  display: flex;
  align-items: center;
  padding-left: 14px;
  font-size: 15px;
  letter-spacing: -0.05px;
  white-space: nowrap;
}
.generate span {
  margin: -2px 0 0 6px;
}

/* taskbar */
.taskbar {
  height: 50px;
  flex: none;
  background: #eeeeee;
  border-top: 1px solid #dcdcdc;
  display: flex;
  color: #1f1f1f;
  font-family: "Open Sans", sans-serif;
}
.weather {
  width: 431px;
  padding: 4px 0 0 22px;
  display: flex;
}
.w-text {
  display: flex;
  flex-direction: column;
  padding-top: 2.500px;
  margin-left: 3px;
  font-size: 12px;
  line-height: 17px;
}
.w-text b {
  font-weight: 400;
}
.w-text span {
  color: #5c5c5c;
}
.badge {
  font: 11.500px "Liberation Sans", sans-serif;
  fill: #fff;
}
.dock {
  display: flex;
  height: 49px;
}
.slot {
  width: 45.850px;
  height: 49px;
  padding-top: 1px;
  position: relative;
  display: flex;
  align-items: center;
  justify-content: center;
}
.search {
  width: 227px;
  height: 33px;
  margin: 7.500px 3.500px 0 4px;
  border-radius: 17px;
  border: 1px solid #dadada;
  background: #fbfbfb;
  display: flex;
  align-items: center;
  padding: 0 4px 0 10px;
}
.search span {
  margin-left: 9.500px;
  font-size: 14px;
  letter-spacing: -0.1px;
  color: #555;
}
.forest {
  margin-left: auto;
}
.slot.run::after {
  content: "";
  position: absolute;
  bottom: 4px;
  width: 6px;
  height: 3px;
  border-radius: 2px;
  background: #858585;
}
.slot.chrome::before {
  content: "";
  position: absolute;
  left: 3.500px;
  top: 4px;
  width: 39px;
  height: 40px;
  border-radius: 5px;
  background: #fafafa;
  border: 1px solid #e6e6e6;
}
.slot.chrome svg {
  position: relative;
}
.slot.chrome .profile {
  position: absolute;
  left: 23px;
  top: 6px;
}
.slot.chrome::after {
  content: "";
  position: absolute;
  bottom: 4px;
  width: 16px;
  height: 3px;
  border-radius: 2px;
  background: #1573c4;
}
.m365 {
  font: bold 6.500px "Liberation Sans", sans-serif;
  fill: #fff;
}
.tray {
  margin-left: auto;
  padding-right: 20px;
  display: flex;
  align-items: center;
  height: 48px;
  font-size: 12.300px;
  line-height: 17px;
}
.tray span {
  display: block;
}
.cloud {
  margin-left: 19px;
}
.lang-ind {
  width: 26px;
  margin-left: 17.500px;
  text-align: center;
}
.wifi {
  margin-left: 18px;
}
.vol {
  margin-left: 8px;
}
.bat {
  margin-left: 8px;
}
.clock {
  width: 66px;
  margin-left: 14px;
  text-align: right;
  font-size: 12.500px;
  white-space: nowrap;
}
.five {
  font: bold 11px "Open Sans", sans-serif;
  fill: #fff;
}
</style>
